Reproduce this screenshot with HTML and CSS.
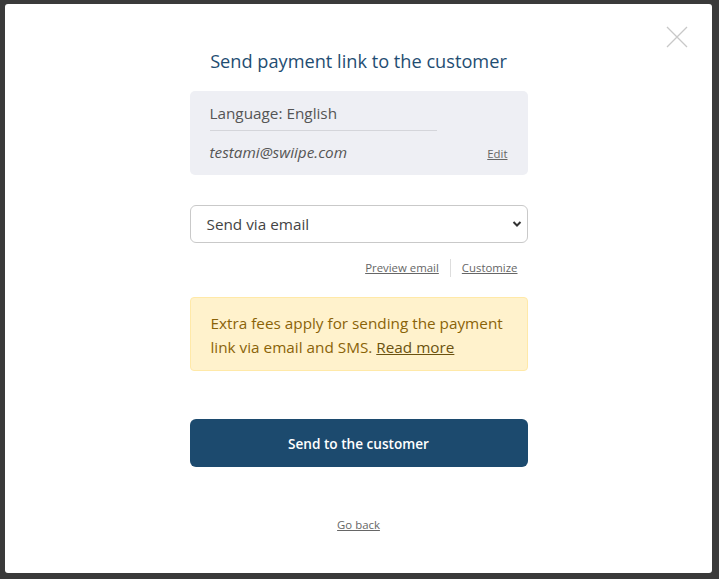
FILE: index.html
```html
<!DOCTYPE html>
<html>
<head>
<meta charset="utf-8">
<link rel="stylesheet" href="styles.css">
</head>
<body>
<div class="overlay">
  <div class="modal">
    <button class="close" aria-label="Close">
      <svg width="22" height="22" viewBox="0 0 22 22"><path d="M1 1L21 21M21 1L1 21" stroke="#c8c8c8" stroke-width="1.3" fill="none"/></svg>
    </button>
    <div class="content">
      <h2 class="title">Send payment link to the customer</h2>
      <div class="info">
        <div class="lang">Language: English</div>
        <div class="email-row">
          <span class="email">testami@swiipe.com</span>
          <a class="small-link" href="#">Edit</a>
        </div>
      </div>
      <div class="select">
        <span>Send via email</span>
        <svg width="10" height="8" viewBox="0 0 10 8"><path d="M1.5 2L5 5.5L8.5 2" stroke="#333" stroke-width="2" fill="none"/></svg>
      </div>
      <div class="links">
        <a class="small-link" href="#">Preview email</a>
        <span class="sep"></span>
        <a class="small-link" href="#">Customize</a>
      </div>
      <div class="alert">Extra fees apply for sending the payment link via email and SMS. <a href="#">Read more</a></div>
      <button class="send">Send to the customer</button>
      <a class="small-link back" href="#">Go back</a>
    </div>
  </div>
</div>
</body>
</html>
```
FILE: styles.css
```css
* { box-sizing: border-box; }
html, body { margin: 0; padding: 0; }
body {
  background: #3a3a3a;
  font-family: "Open Sans", "Noto Sans", sans-serif;
  width: 719px;
  height: 579px;
  overflow: hidden;
}
.overlay {
  padding: 4px 7px 6px 5px;
  height: 579px;
}
.modal {
  position: relative;
  background: #fff;
  height: 569px;
  border-radius: 3px;
}
.close {
  position: absolute;
  top: 22px;
  left: 661px;
  background: none;
  border: 0;
  padding: 0;
  width: 22px;
  height: 22px;
}
.content {
  width: 338px;
  margin: 0 auto;
  padding-top: 45px;
  display: flex;
  flex-direction: column;
}
.title {
  margin: 0;
  font-weight: 400;
  font-size: 18.2px;
  line-height: 24px;
  color: #1f4d72;
  text-align: center;
}
.info {
  margin-top: 18px;
  background: #eeeff4;
  border-radius: 5px;
  padding: 10px 20px 11px 20px;
  color: #555;
}
.lang {
  font-size: 15.3px;
  line-height: 24px;
  padding-bottom: 5px;
  border-bottom: 1px solid #d4d5da;
  width: 227px;
}
.email-row {
  display: flex;
  justify-content: space-between;
  align-items: baseline;
  padding-top: 9px;
}
.email {
  font-style: italic;
  font-size: 15.3px;
  line-height: 24px;
}
.small-link {
  font-size: 11.4px;
  color: #666;
  text-decoration: underline;
}
.select {
  margin-top: 30px;
  height: 38px;
  border: 1px solid #c9c9c9;
  border-radius: 6px;
  display: flex;
  align-items: center;
  justify-content: space-between;
  padding: 0 5px 0 16px;
  font-size: 15.3px;
  color: #444;
}
.links {
  margin-top: 16px;
  display: flex;
  justify-content: flex-end;
  align-items: center;
  gap: 11px;
  padding-right: 10px;
  line-height: 18px;
}
.sep {
  width: 1px;
  height: 18px;
  background: #ddd;
}
.alert {
  margin-top: 20px;
  background: #fff2cc;
  border: 1px solid #ffe9a8;
  border-radius: 4px;
  padding: 13px 20px 11px 20px;
  color: #8a6308;
  font-size: 15.3px;
  line-height: 24px;
}
.alert a { color: #6b5210; text-decoration: underline; }
.send {
  margin-top: 48px;
  height: 48px;
  background: #1c4a6e;
  color: #fff;
  border: 0;
  border-radius: 6px;
  font-family: inherit;
  font-weight: 600;
  font-size: 13.6px;
}
.back {
  align-self: center;
  margin-top: 50px;
}
```
